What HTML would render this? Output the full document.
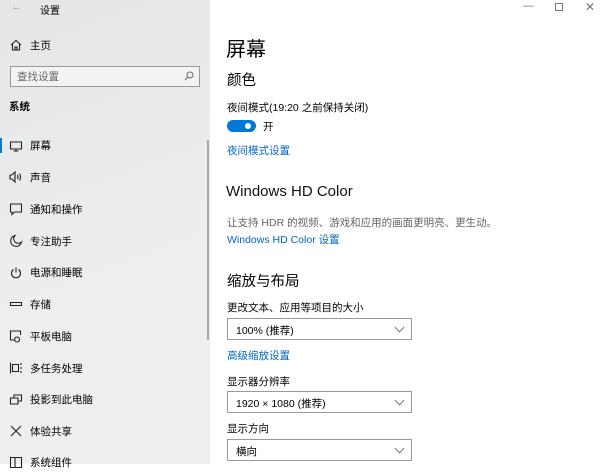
<!DOCTYPE html>
<html><head><meta charset="utf-8"><style>
*{margin:0;padding:0;box-sizing:border-box}
body{width:600px;height:464px;overflow:hidden;position:relative;background:#fff;font-family:"Liberation Sans","Noto Sans CJK SC",sans-serif;color:#000}
.side{position:absolute;left:0;top:0;width:210px;height:464px;background:linear-gradient(160deg,#e4e6e8 0%,#eceeef 60%,#efefef 100%)}
.t{position:absolute;white-space:nowrap}
.ico{position:absolute;left:9px;width:14px;height:14px}
.ico svg{width:14px;height:14px;fill:none;stroke:#222;stroke-width:1.1}
.dd{position:absolute;left:227px;width:185px;height:22px;border:1.5px solid #999;font-size:10.5px;padding:4px 0 0 8px}
.dd:after{content:"";position:absolute;right:8px;top:5px;width:6px;height:6px;border-right:1px solid #777;border-bottom:1px solid #777;transform:rotate(45deg)}
.lnk{color:#0067c0;font-size:10.5px}
</style></head><body>
<div class="side">
<div class="t" style="left:11px;top:1px;font-size:11px;color:#999">←</div>
<div class="t" style="left:40px;top:2px;font-size:10px">设置</div>
<div class="ico" style="top:38px"><svg viewBox="0 0 14 14"><path d="M2 7L7 2.5 12 7M3.5 6v6h7V6M6 12V9h2v3"/></svg></div>
<div class="t" style="left:30px;top:38px;font-size:10.5px">主页</div>
<div style="position:absolute;left:10px;top:66px;width:190px;height:21px;border:1.5px solid #999;background:#f3f3f3"></div>
<div class="t" style="left:17px;top:69px;font-size:10.5px;color:#666">查找设置</div>
<svg style="position:absolute;left:184px;top:71px;width:10px;height:10px" viewBox="0 0 10 10" fill="none" stroke="#666" stroke-width="1"><circle cx="6" cy="4" r="3"/><path d="M4 6L1 9"/></svg>
<div class="t" style="left:9px;top:99px;font-size:10.5px;font-weight:bold">系统</div>
<div style="position:absolute;left:0;top:138px;width:2px;height:15px;background:#0078d7"></div>
<div style="position:absolute;left:207px;top:140px;width:2px;height:200px;background:#aaa"></div>
<div class="ico" style="top:139px"><svg viewBox="0 0 14 14"><path d="M1.5 3h11v7h-11zM7 10v2M4.5 12h5"/></svg></div>
<div class="t" style="left:30px;top:138px;font-size:10.5px">屏幕</div>
<div class="ico" style="top:170px"><svg viewBox="0 0 14 14"><path d="M1 5h2l3-3v10l-3-3H1zM8.5 5q1 2 0 4M10.5 3.5q2 3.5 0 7"/></svg></div>
<div class="t" style="left:30px;top:170px;font-size:10.5px">声音</div>
<div class="ico" style="top:202px"><svg viewBox="0 0 14 14"><path d="M1.5 2h11v8h-7l-2.5 2.5V10h-1.5z"/></svg></div>
<div class="t" style="left:30px;top:202px;font-size:10.5px">通知和操作</div>
<div class="ico" style="top:234px"><svg viewBox="0 0 14 14"><path d="M6 1.5a5.5 5.5 0 1 0 6.5 6.5A4.5 4.5 0 0 1 6 1.5z"/></svg></div>
<div class="t" style="left:30px;top:234px;font-size:10.5px">专注助手</div>
<div class="ico" style="top:266px"><svg viewBox="0 0 14 14"><path d="M7 1.5v5M4.5 3.5a4.5 4.5 0 1 0 5 0"/></svg></div>
<div class="t" style="left:30px;top:265px;font-size:10.5px">电源和睡眠</div>
<div class="ico" style="top:297px"><svg viewBox="0 0 14 14"><path d="M1.5 5.5h11v3h-11z"/></svg></div>
<div class="t" style="left:30px;top:297px;font-size:10.5px">存储</div>
<div class="ico" style="top:329px"><svg viewBox="0 0 14 14"><path d="M6 11H1.5V2h10v4M8 8a2.5 2.5 0 1 0 0.1 0"/></svg></div>
<div class="t" style="left:30px;top:329px;font-size:10.5px">平板电脑</div>
<div class="ico" style="top:361px"><svg viewBox="0 0 14 14"><path d="M1.5 1.5v11M3.5 3.5h6v7h-6zM12 2v2M12 6v2M12 10v2"/></svg></div>
<div class="t" style="left:30px;top:361px;font-size:10.5px">多任务处理</div>
<div class="ico" style="top:393px"><svg viewBox="0 0 14 14"><path d="M5 5V2h7.5v6H9M1.5 5h7.5v6H1.5z"/></svg></div>
<div class="t" style="left:30px;top:392px;font-size:10.5px">投影到此电脑</div>
<div class="ico" style="top:424px"><svg viewBox="0 0 14 14"><path d="M2 2l10 10M12 2L2 12"/></svg></div>
<div class="t" style="left:30px;top:424px;font-size:10.5px">体验共享</div>
<div class="ico" style="top:456px"><svg viewBox="0 0 14 14"><path d="M1.5 1.5h11v10h-11zM6 1.5v10"/></svg></div>
<div class="t" style="left:30px;top:455px;font-size:10.5px">系统组件</div>
</div>
<div class="t" style="left:523px;top:0px;font-size:11px;color:#777">—</div>
<div style="position:absolute;left:555px;top:3px;width:8px;height:8px;border:1px solid #777"></div>
<div class="t" style="left:585px;top:0px;font-size:12px;color:#777">✕</div>
<div class="t" style="left:226px;top:33px;font-size:20px">屏幕</div>
<div class="t" style="left:227px;top:69px;font-size:14.5px">颜色</div>
<div class="t" style="left:227px;top:100px;font-size:10.5px">夜间模式(19:20 之前保持关闭)</div>
<div style="position:absolute;left:227px;top:120px;width:29px;height:12px;border-radius:6px;background:#0078d7"></div>
<div style="position:absolute;left:245px;top:123px;width:6px;height:6px;border-radius:3px;background:#fff"></div>
<div class="t lnk" style="left:263px;top:119px;color:#000">开</div>
<div class="t lnk" style="left:227px;top:143px">夜间模式设置</div>
<div class="t" style="left:226px;top:183px;font-size:15px;color:#111">Windows HD Color</div>
<div class="t" style="left:227px;top:215px;font-size:10.5px;color:#666">让支持 HDR 的视频、游戏和应用的画面更明亮、更生动。</div>
<div class="t lnk" style="left:227px;top:232px">Windows HD Color 设置</div>
<div class="t" style="left:227px;top:270px;font-size:14.5px">缩放与布局</div>
<div class="t" style="left:227px;top:300px;font-size:10.5px">更改文本、应用等项目的大小</div>
<div class="dd" style="top:318px">100% (推荐)</div>
<div class="t lnk" style="left:227px;top:348px">高级缩放设置</div>
<div class="t" style="left:227px;top:374px;font-size:10.5px">显示器分辨率</div>
<div class="dd" style="top:391px">1920 × 1080 (推荐)</div>
<div class="t" style="left:227px;top:421px;font-size:10.5px">显示方向</div>
<div class="dd" style="top:439px">横向</div>
</body></html>
